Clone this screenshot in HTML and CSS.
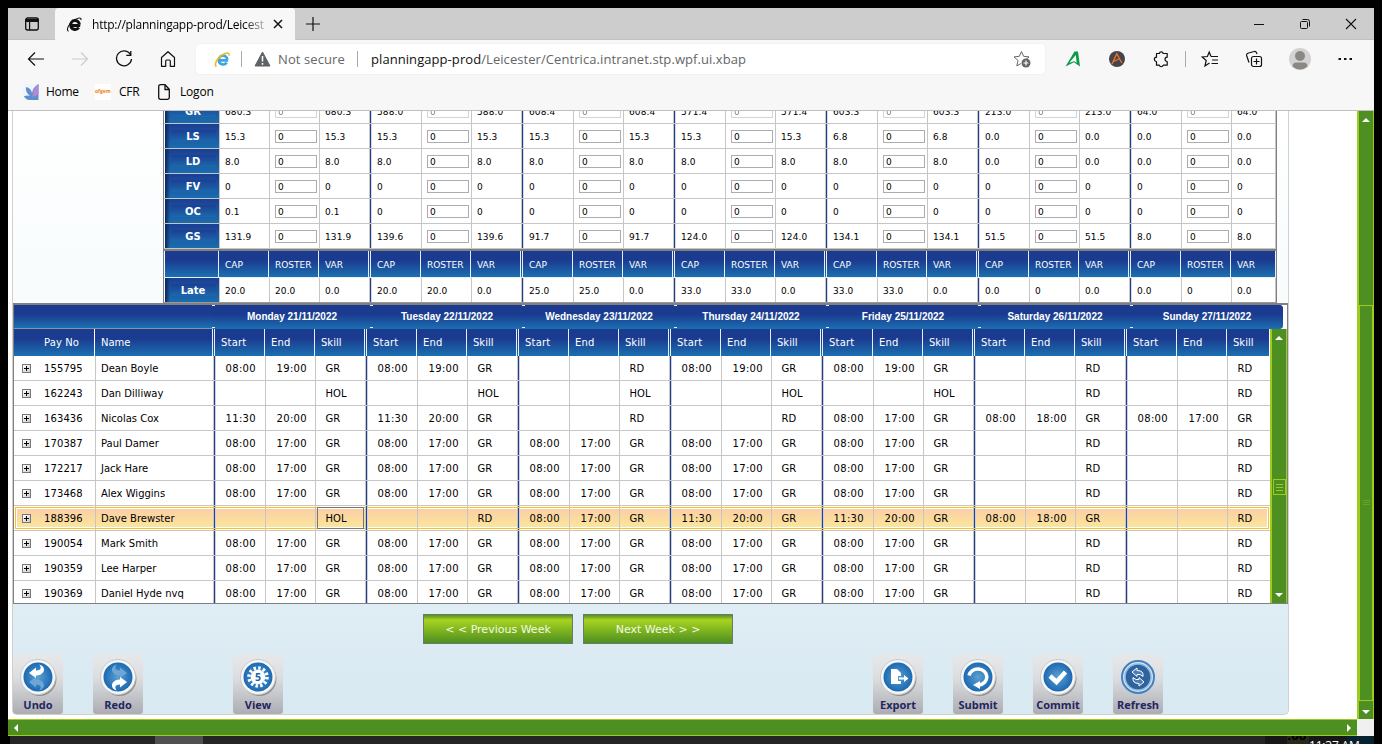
FILE: index.html
```html
<!DOCTYPE html>
<html lang="en">
<head>
<meta charset="utf-8">
<title>Planning</title>
<link rel="stylesheet" href="styles.css">
</head>
<body>
<div class="screen">
<div class="window">
  <header class="tabstrip">
    <div class="tab-menu"><svg width="16" height="16" viewBox="0 0 16 16"><rect x="1.700" y="2" width="12.600" height="12" rx="2" fill="none" stroke="#111" stroke-width="1.300"/><path d="M1.500 3h13v3h-13zM5 6h1.200v8H5z" fill="#111"/></svg></div>
    <div class="tab">
      <svg class="tab-ico" width="17" height="17" viewBox="0 0 17 17"><path d="M14.200 9.400H6.200M12.700 11.500a4.300 4.300 0 0 1-7.900-2.300a4.300 4.300 0 0 1 8.600-.6" fill="none" stroke="#111" stroke-width="3"/><path d="M2.600 15.300C0 14.500 2 8 8 4.200 12 1.500 15.500 1 15 4.200" fill="none" stroke="#111" stroke-width="1.100"/></svg>
      <span class="tab-title">http://planningapp-prod/Leicest</span>
      <svg width="10" height="10" viewBox="0 0 10 10"><path d="M1 1l8 8M9 1l-8 8" stroke="#111" stroke-width="1.500"/></svg>
    </div>
    <svg class="plus" width="14" height="14" viewBox="0 0 14 14"><path d="M7 0v14M0 7h14" stroke="#111" stroke-width="1.200"/></svg>
    <div class="wincontrols">
      <svg width="12" height="12" viewBox="0 0 12 12"><path d="M1 6.500h10" stroke="#111"/></svg>
      <svg width="12" height="12" viewBox="0 0 12 12"><rect x="1.500" y="3.500" width="7" height="7" rx="1" fill="none" stroke="#111"/><path d="M3.500 1.500h5a2 2 0 0 1 2 2v5" fill="none" stroke="#111"/></svg>
      <svg width="12" height="12" viewBox="0 0 12 12"><path d="M1 1l10 10M11 1L1 11" stroke="#111" stroke-width="1.100"/></svg>
    </div>
  </header>
  <nav class="toolbar">
    <div class="navbtns">
      <svg width="18" height="18" viewBox="0 0 18 18"><path d="M17 9H1.500M8 2.500L1.500 9 8 15.500" fill="none" stroke="#111" stroke-width="1.200"/></svg>
      <svg width="18" height="18" viewBox="0 0 18 18"><path d="M1 9h15.500M10 2.500L16.500 9 10 15.500" fill="none" stroke="#ccc" stroke-width="1.200"/></svg>
      <svg width="18" height="18" viewBox="0 0 18 18"><path d="M15.500 4.500A7.500 7.500 0 1 0 16.500 9M15.800 1v4.300h-4.500" fill="none" stroke="#111" stroke-width="1.300"/></svg>
      <svg width="18" height="18" viewBox="0 0 18 18"><path d="M2.500 7.500L9 1.700l6.500 5.800V16.300H11.300V11a1 1 0 0 0-1-1H7.700a1 1 0 0 0-1 1v5.300H2.500z" fill="none" stroke="#111" stroke-width="1.200" stroke-linejoin="round"/></svg>
    </div>
    <div class="address">
      <svg width="17" height="17" viewBox="0 0 17 17"><path d="M14.200 9.400H6.200M12.700 11.500a4.300 4.300 0 0 1-7.900-2.300a4.300 4.300 0 0 1 8.600-.6" fill="none" stroke="#3aa7e0" stroke-width="2.600"/><path d="M2.500 15.500C0 14.500 2 8 8 4.200 12 1.500 15.700 1 15 4.700" fill="none" stroke="#f2b91d" stroke-width="1.600"/></svg>
      <i class="vbar"></i>
      <svg width="17" height="16" viewBox="0 0 17 16"><path d="M8.500 1L16 15H1z" fill="#5f6368" stroke="#5f6368" stroke-linejoin="round"/><path d="M8.500 5v5.500M8.500 12v1.700" stroke="#fff" stroke-width="1.500"/></svg>
      <span class="insecure">Not secure</span>
      <i class="vbar second"></i>
      <span class="url"><b>planningapp-prod</b>/Leicester/Centrica.intranet.stp.wpf.ui.xbap</span>
      <svg class="favadd" width="18" height="18" viewBox="0 0 18 18"><path d="M8.500 1.500l2.100 4.800 5.400.6-3 2.600M8.500 1.500L6.300 6.300 1 6.900l4 3.600-1.200 5.400 4-2.300" fill="none" stroke="#666" stroke-linejoin="round"/><circle cx="13" cy="13" r="4.500" fill="#666"/><path d="M13 10.500v5M10.500 13h5" stroke="#fff" stroke-width="1.200"/></svg>
    </div>
    <div class="tools">
      <svg width="18" height="18" viewBox="0 0 18 18"><path d="M1.500 16.500L10.500 1.500H14l2 15-6-4.300zM5.300 12.800l5-1.600 2.400 1.500-.9-7.700z" fill="#0a9a48" fill-rule="evenodd"/></svg>
      <svg width="18" height="18" viewBox="0 0 18 18"><circle cx="9" cy="9" r="8" fill="#47424c"/><path d="M4 14L8.800 3.700 13.800 13M5.500 11.500L11 9" fill="none" stroke="#e87829" stroke-width="1.300"/></svg>
      <svg width="18" height="18" viewBox="0 0 18 18"><path d="M4.500 3.500h2.800a2 2 0 0 1 3.900 0h4v3.700a2 2 0 1 0 0 4.300v3.700h-4a2 2 0 0 1-3.900 0H4.500v-3.700a2.100 2.100 0 0 1 0-4.300z" fill="none" stroke="#111" stroke-width="1.200" stroke-linejoin="round"/></svg>
      <i class="vbar"></i>
      <svg width="18" height="18" viewBox="0 0 18 18"><path d="M10 6.500L8.200 2 6.400 6.500 1.200 7l4 3.500L4 16l4.500-3M10 6.500h7M11 10h6M10.500 13.500H17" fill="none" stroke="#111" stroke-width="1.200"/></svg>
      <svg width="18" height="18" viewBox="0 0 18 18"><rect x="6.500" y="6.500" width="10" height="10" rx="2" fill="none" stroke="#111" stroke-width="1.200"/><path d="M11.500 8.500v6M8.500 11.500h6M4 12.500L1.600 5.500a2 2 0 0 1 1.200-2.300L9 1.500a2 2 0 0 1 2.500 1.200L12 4" fill="none" stroke="#111" stroke-width="1.200"/></svg>
      <svg width="22" height="22" viewBox="0 0 22 22"><circle cx="11" cy="11" r="11" fill="#d5d3d1"/><circle cx="11" cy="8" r="5" fill="#8b8784"/><path d="M3.500 18.500q0-4 4-4h7q4 0 4 4a11 11 0 0 1-15 0" fill="#8b8784"/></svg>
      <svg width="16" height="16" viewBox="0 0 16 16"><path d="M1.500 7h2.500v2H1.500zM7 7h2.500v2H7zM12.500 7H15v2h-2.500z" fill="#111"/></svg>
    </div>
  </nav>
  <div class="bookmarks">
    <svg width="16" height="16" viewBox="0 0 16 16"><rect width="16" height="16" fill="#eef6fb"/><path d="M15.500 0v16H6q-4-1-5-4 4-1 6 0Q2 8 3 3q5 1 6 6 1-6 6.500-9" fill="#5f8fce"/><path d="M15.500 0v10q-3 2-6 3 0-9 6-13" fill="#b38ad0"/></svg><span class="bm1">Home</span>
    <span class="ofgem">ofgem</span><span class="bm2">CFR</span>
    <svg width="14" height="16" viewBox="0 0 14 16"><path d="M1.700 2.500q0-1.800 1.800-1.800H8l4.300 4.500v8.300q0 1.800-1.800 1.800h-7q-1.800 0-1.800-1.800zM8 1v4.500h4.300" fill="none" stroke="#111" stroke-width="1.300"/></svg><span class="bm3">Logon</span>
  </div>
  <main class="viewport">
    <div class="page">
      <section class="panel">
        <div class="capacity" id="capacity"></div>
        <div class="roster">
          <div class="roster-head">
            <div class="days" id="days"></div>
          </div>
          <div class="roster-body">
            <div class="grid" id="grid"></div>
            <div class="inner-scroll"><i class="up"></i><i class="grip"></i><i class="down"></i></div>
          </div>
        </div>
        <div class="weeks"><button>&lt; &lt; Previous Week</button><button>Next Week &gt; &gt;</button></div>
        <div class="actions" id="actions"></div>
      </section>
    </div>
    <div class="outer-scroll"><i class="up"></i><div class="thumb"><i></i></div><i class="down"></i></div>
  </main>
  <div class="hscroll"><div class="track"><i class="left"></i><i class="right"></i></div></div>
</div>
<footer class="taskbar"><span class="task"></span><span class="tray">.00</span><span class="traybox"></span><span class="clock">11:37 AM</span></footer>
</div>
<script src="script.js"></script>
</body>
</html>
```
FILE: styles.css
```css
* { box-sizing: border-box; }
body { margin: 0; background: #000; font-family: "DejaVu Sans", Verdana, sans-serif; color: #000; }
svg { display: block; flex: none; }
.screen { height: 744px; overflow: hidden; padding-top: 8px; display: flex; flex-direction: column; }
.window { margin: 0 8px; height: 728px; flex: none; background: #f7f7f7; display: flex; flex-direction: column; }
.tabstrip { height: 32px; background: #cdcdcd; display: flex; align-items: center; flex: none; border-bottom: 1px solid #c2c2c2; font: 12px "Open Sans", sans-serif; }
.tab-menu { width: 47px; padding-left: 16px; }
.tab { width: 240px; height: 32px; background: #f7f7f7; border-radius: 4px 4px 0 0; display: flex; align-items: center; padding-left: 11px; margin-bottom: -1px; }
.tab-title { width: 172px; margin: 0 9px 0 9px; white-space: nowrap; letter-spacing: -.23px; -webkit-mask-image: linear-gradient(90deg, #000 88%, #0004); mask-image: linear-gradient(90deg, #000 88%, #0004); }
.plus { margin-left: 11px; }
.wincontrols { margin-left: auto; display: flex; gap: 34px; padding-right: 17px; }
.toolbar { height: 38px; display: flex; align-items: center; flex: none; }
.navbtns { display: flex; gap: 26px; padding-left: 19px; width: 187px; }
.address { width: 849px; height: 30px; background: #fff; border-radius: 4px; display: flex; align-items: center; padding: 0 14px 0 18px; font: 13px "Open Sans", sans-serif; box-shadow: 0 0 2px #e4e4e4; margin-left: 1px; }
.vbar { width: 1px; height: 16px; background: #aaa; margin: 0 12px 0 10px; }
.vbar.second { margin: 0 13px 0 12px; }
.insecure { color: #666; margin-left: 7px; width: 67px; white-space: nowrap; letter-spacing: .1px; }
.url { color: #666; white-space: nowrap; letter-spacing: .07px; }
.url b { font-weight: normal; color: #111; }
.favadd { margin-left: auto; }
.tools { display: flex; align-items: center; padding-left: 19px; gap: 26px; }
.tools .vbar { margin: 0 -11px 0 -11px; }
.bookmarks { height: 32px; flex: none; display: flex; align-items: flex-start; padding: 6px 0 0 15px; font: 12px/16px "Open Sans", sans-serif; }
.bookmarks span { margin-left: 7px; }
.bookmarks .bm1 { width: 34px; letter-spacing: -.3px; }
.bookmarks .ofgem { width: 16px; height: 16px; margin-left: 15px; background: #fff; color: #f08010; font: bold 5px/15px "Open Sans", sans-serif; }
.bookmarks .bm2 { width: 24px; margin: 0 14px 0 8px; letter-spacing: -.2px; }
.bookmarks .bm3 { margin-left: 9px; letter-spacing: -.2px; }
.viewport { height: 609px; flex: none; display: flex; border-top: 1px solid #c0c0c0; background: #fff; }
.page { width: 1349px; padding-left: 4px; overflow: hidden; }
.panel { width: 1277px; height: 604px; border: 1px solid #d0d0d0; border-top: 0; border-radius: 0 0 5px 5px; background: linear-gradient(#fff, #f8fcfd 30%, #e2eff6 75%, #d8e9f1); display: flex; flex-direction: column; }

.capacity { margin-left: 150px; width: 1114px; height: 192px; border-left: 1px solid #808080; border-right: 1px solid #808080; background: #fff; display: flex; flex-direction: column; justify-content: flex-end; overflow: hidden; flex: none; font-size: 9px; }
.cap-row { display: flex; height: 25px; flex: none; padding-left: 1px; border-bottom: 1px solid #c6c6c6; line-height: 22px; }
.cap-row > div { flex: none; }
.cap-row .label { width: 55px; border-right: 1px solid #c6c6c6; background: linear-gradient(90deg, #0a2454 0, transparent 5px), linear-gradient(#1b3f92, #1b6daf); display: flex; align-items: center; justify-content: center; color: #fff; font-weight: bold; font-size: 10px; padding-left: 2px; }
.label span { width: 45px; height: 12px; line-height: 13px; text-align: center; background: linear-gradient(#1b3f94, #1c69ac); }
.cap-row .c { width: 50px; border-right: 1px solid #c6c6c6; padding: 2px 0 0 5px; display: flex; align-items: center; letter-spacing: .1px; }
.cap-row .c.v { width: 51px; border-right: 1px solid #1b3f92; box-shadow: inset -1px 0 #c6c6c6, 1px 0 #d8d8d8; margin-right: 1px; }
.cap-row .c.v:last-child { width: 44px; border-right: 1px solid #c6c6c6; box-shadow: none; margin-right: 0; }
.cap-row input { width: 42px; height: 13px; border: 1px solid #abadb3; padding: 0 0 0 2px; font: 9px "DejaVu Sans", sans-serif; background: #fff; color: #000; margin-top: -1px; }
.cap-row.clipped input { opacity: .5; }
.cap-row.head { height: 29px; border-top: 2px solid #808080; border-bottom: 1px solid #e8eef6; color: #fff; }
.cap-row.head > div, .g-row.head > div { background: linear-gradient(#1b3b90 35%, #1b70b1); border-right-color: #e8eef6; }
.cap-row.head > div { padding-top: 2px; letter-spacing: 0; }
.cap-row.head .label { width: 54px; }
.cap-row.head .c { padding-left: 6px; }
.cap-row.head .c.v { width: 52px; margin-right: 0; border-right: 3px double #e8eef6; box-shadow: none; }
.cap-row.head .c.v:last-child { width: 45px; border-right: 1px solid #e8eef6; }
.cap-row.late { border-bottom: 1px solid #999; }

.roster { width: 1275px; height: 301px; flex: none; border: 1px solid #808080; border-top-width: 2px; background: #fff; }
.roster-head { height: 24px; display: flex; background: linear-gradient(#1b3b90 40%, #1b70b1); width: 1269px; border-radius: 0 4px 4px 0; border-bottom: 1px solid #8694a8; }
.days { margin-left: 199px; display: flex; color: #fff; font: bold 10px/23px "Liberation Sans", Arial, sans-serif; }
.days div { position: relative; width: 152px; text-align: center; height: 24px; background: linear-gradient(#1b3b90 40%, #1b70b1); }
.days div:first-child { width: 158px; }
.days div::before, .days div::after { content: ""; position: absolute; left: -1px; top: 0; width: 3px; height: 1px; background: #e8eef6; }
.days div::after { top: 22px; }
.days div:last-child { border-radius: 0 4px 4px 0; }
.roster-body { display: flex; height: 274px; }
.grid { width: 1256px; overflow: hidden; font-size: 10px; flex: none; }
.g-row { display: flex; height: 25px; line-height: 25px; border-bottom: 1px solid #c6c6c6; white-space: nowrap; }
.g-row > div { flex: none; }
.g-row .x { width: 25px; padding: 8px 0 0 8px; }
.g-row .p { width: 57px; padding-left: 5px; border-right: 1px solid #c6c6c6; letter-spacing: .1px; }
.g-row .n { width: 119px; padding-left: 5px; border-right: 1px solid #1b3f92; }
.g-row .n, .g-row .v { box-shadow: inset -1px 0 #c6c6c6, 1px 0 #d0d0d0; }
.g-row .c { width: 50px; padding-left: 10.6px; border-right: 1px solid #c6c6c6; letter-spacing: .3px; }
.g-row .c.s { width: 51px; }
.g-row .v { width: 51px; padding-left: 9.6px; border-right: 1px solid #1b3f92; }
.g-row .v:last-child { width: 42px; border-right: 0; box-shadow: none; }
.g-row.head { height: 27px; border: 0; line-height: 27px; color: #fff; }
.g-row.head .p { width: 56px; border-right: 1px solid #fff; }
.g-row.head .n { width: 120px; padding-left: 6px; border-right: 3px double #e8eef6; }
.g-row.head .n, .g-row.head .v { box-shadow: none; }
.g-row.head .c { padding-left: 6px; letter-spacing: .2px; }
.g-row.head .c.s { width: 50px; }
.g-row.head .v { width: 52px; padding-left: 6px; border-right: 3px double #e8eef6; }
.g-row.head .v:last-child { width: 43px; border-right: 1px solid #fff; }
.g-row.sel { background: linear-gradient(#fbcfa4, #fbe59b) 3px 3px / 1250px 18px no-repeat #fff; position: relative; }
.g-row.sel::after { content: ""; position: absolute; inset: 1px 1px 1px 1px; border: 1px solid #fcc02f; }
.g-row.sel .focus { position: relative; z-index: 1; }
.g-row.sel .focus::before { content: ""; box-sizing: border-box; position: absolute; left: 1px; top: 1px; width: 47px; height: 22px; border: 1px solid #777; }
.plusbox { width: 9px; height: 9px; border: 1px solid #777; background: linear-gradient(#000, #000) center / 5px 1px no-repeat, linear-gradient(#000, #000) center / 1px 5px no-repeat, linear-gradient(135deg, #fff, #ccc); display: block; }
.inner-scroll { width: 17px; flex: none; background: #4d8f21; border: 1px solid #9dcb1e; border-width: 0 1px 0 2px; display: flex; flex-direction: column; align-items: center; }
.up, .down { border: 4px solid transparent; width: 0; height: 0; }
.up { border-bottom-color: #fff; border-top: 0; margin-top: 7px; }
.down { border-top-color: #fff; border-bottom: 0; margin-top: auto; margin-bottom: 6px; }
.grip { width: 13px; height: 16px; border: 1px solid #9dcb1e; margin-top: 139px; background: repeating-linear-gradient(#9dcb1e 0 1px, transparent 1px 3px) center / 7px 7px no-repeat; }
.weeks { display: flex; gap: 10px; padding: 10px 0 0 410px; flex: none; }
.weeks button { width: 150px; height: 30px; border: 1px solid #6c7a6c; background: linear-gradient(#568f20 0, #a7d31f 5px, #4d8f21); color: #f3f9e6; font: 11px "DejaVu Sans", sans-serif; padding: 0; }
.actions { display: flex; margin-top: 10px; }
.action { width: 50px; height: 60px; flex: none; border-radius: 3px; background: linear-gradient(#e6e9eb, #dcdddf 40%, #acadb3); text-align: center; margin-right: 30px; font: bold 11px/13px "Open Sans", sans-serif; color: #232560; }
.action:nth-of-type(2) { margin-right: 90px; }
.action:nth-of-type(3) { margin-right: 590px; }
.action svg { margin: 4px auto 1px; }
.defs { position: absolute; }
.outer-scroll { width: 17px; background: #4d8f21; border: 1px solid #9dcb1e; border-width: 0 1px 0 2px; display: flex; flex-direction: column; align-items: center; }
.outer-scroll .down { margin-bottom: 5px; }
.thumb { width: 15px; height: 396px; margin: 183px 0 0 -1px; border: 1px solid #9dcb1e; border-left-width: 2px; display: flex; align-items: center; justify-content: center; flex: none; }
.thumb i { width: 7px; height: 6px; background: repeating-linear-gradient(#66a522 0 1px, transparent 1px 2px); }
.hscroll { height: 17px; background: #f0f0f0; flex: none; }
.track { width: 1349px; height: 17px; background: #4d8f21; border: 1px solid #9dcb1e; border-width: 1px 0; display: flex; justify-content: space-between; align-items: center; padding: 0 6px; }
.left, .right { border: 4px solid transparent; }
.left { border-right-color: #fff; border-left: 0; }
.right { border-left-color: #fff; border-right: 0; }
.taskbar { height: 8px; margin: 0 8px 0 10px; background: linear-gradient(#252525, #252525) left / 1255px 100% no-repeat #171717; display: flex; overflow: hidden; flex: none; }
.task { width: 48px; background: #505050; margin-left: 145px; flex: none; }
.tray { margin-left: 1084px; width: 22px; color: #000; background: #29271a; font: bold 11px/2px "DejaVu Sans", sans-serif; flex: none; }
.traybox { width: 38px; margin-left: 38px; background: #06222f; flex: none; }
.clock { color: #fff; font: 12px/20px "Open Sans", sans-serif; white-space: nowrap; margin-left: -76px; position: relative; letter-spacing: -.2px; }
```
FILE: script.js
```js
const capRows = [
  ["GR", "680.3", "588.0", "608.4", "571.4", "603.3", "213.0", "64.0"],
  ["LS", "15.3", "15.3", "15.3", "15.3", "6.8", "0.0", "0.0"],
  ["LD", "8.0", "8.0", "8.0", "8.0", "8.0", "0.0", "0.0"],
  ["FV", "0", "0", "0", "0", "0", "0", "0"],
  ["OC", "0.1", "0", "0", "0", "0", "0", "0"],
  ["GS", "131.9", "139.6", "91.7", "124.0", "134.1", "51.5", "8.0"]
];
let html = "";
capRows.forEach(([name, ...vals], i) => {
  html += `<div class="cap-row${i ? "" : " clipped"}"><div class="label"><span>${name}</span></div>` +
    vals.map(v => `<div class="c">${v}</div><div class="c"><input value="0"></div><div class="c v">${v}</div>`).join("") + "</div>";
});
html += '<div class="cap-row head"><div class="label"></div>' +
  '<div class="c">CAP</div><div class="c">ROSTER</div><div class="c v">VAR</div>'.repeat(7) + "</div>";
html += '<div class="cap-row late"><div class="label"><span>Late</span></div>' +
  [["20.0", "20.0"], ["20.0", "20.0"], ["25.0", "25.0"], ["33.0", "33.0"], ["33.0", "33.0"], ["0.0", "0"], ["0.0", "0"]]
    .map(([a, b]) => `<div class="c">${a}</div><div class="c">${b}</div><div class="c v">0.0</div>`).join("") + "</div>";
document.getElementById("capacity").innerHTML = html;

document.getElementById("days").innerHTML =
  ["Monday 21", "Tuesday 22", "Wednesday 23", "Thursday 24", "Friday 25", "Saturday 26", "Sunday 27"]
    .map(d => `<div>${d}/11/2022</div>`).join("");

const G = ["08:00", "17:00", "GR"], L = ["08:00", "19:00", "GR"], M = ["11:30", "20:00", "GR"],
  E = ["08:00", "18:00", "GR"], R = ["", "", "RD"], H = ["", "", "HOL"];
const staff = [
  ["155795", "Dean Boyle", L, L, R, L, L, R, R],
  ["162243", "Dan Dilliway", H, H, H, H, H, R, R],
  ["163436", "Nicolas Cox", M, M, R, R, G, E, G],
  ["170387", "Paul Damer", G, G, G, G, G, R, R],
  ["172217", "Jack Hare", G, G, G, G, G, R, R],
  ["173468", "Alex Wiggins", G, G, G, G, G, R, R],
  ["188396", "Dave Brewster", H, R, G, M, M, E, R],
  ["190054", "Mark Smith", G, G, G, G, G, R, R],
  ["190359", "Lee Harper", G, G, G, G, G, R, R],
  ["190369", "Daniel Hyde nvq", G, G, G, G, G, R, R]
];
let grid = '<div class="g-row head"><div class="x"></div><div class="p">Pay No</div><div class="n">Name</div>' +
  '<div class="c s">Start</div><div class="c">End</div><div class="v">Skill</div>'.repeat(7) + "</div>";
staff.forEach(([no, name, ...days], i) => {
  grid += `<div class="g-row${i === 6 ? " sel" : ""}"><div class="x"><i class="plusbox"></i></div><div class="p">${no}</div><div class="n">${name}</div>` +
    days.map(([s, e, k], j) => `<div class="c s">${s}</div><div class="c">${e}</div><div class="v${i === 6 && j === 0 ? " focus" : ""}">${k}</div>`).join("") + "</div>";
});
document.getElementById("grid").innerHTML = grid;

const swirl = '<path d="M20 6.500c8 2 6 11-3 11v2.500l-7-5 7-5.500v3c5 0 6-3 3-6z"/>';
const icons = {
  Undo: `<g fill="#6fa6d6" transform="translate(0 39) scale(1 -1)">${swirl}</g><g fill="#fff">${swirl}</g>`,
  Redo: `<g fill="#6fa6d6" transform="translate(38 0) scale(-1 1)">${swirl}</g><g fill="#fff" transform="translate(38 39) scale(-1 -1)">${swirl}</g>`,
  View: '<circle cx="19" cy="19" r="9" fill="none" stroke="#fff" stroke-width="3.500" stroke-dasharray="2.400 2.310"/><circle cx="19" cy="19" r="7.300" fill="#fff"/><text x="19" y="22.800" text-anchor="middle" font-size="10.500" font-weight="bold" fill="#1d5fa8">5</text>',
  Export: '<path d="M12 11h6l4 4v3h-3v5h3v3H12zM20 19.500h5v-2.500l4.500 3.500-4.500 3.500v-2.500h-5z" fill="#fff"/>',
  Submit: '<path d="M10 17.500a9 8 0 1 1 10 9.500" fill="none" stroke="#fff" stroke-width="3.500"/><path d="M21 23v8l-7-4z" fill="#fff"/>',
  Commit: '<path d="M11 18l6.500 6 9-10" fill="none" stroke="#fff" stroke-width="4.500"/>',
  Refresh: '<circle cx="19" cy="19" r="13" fill="#2d649f" stroke="#8fb7dc" stroke-width="1.500"/><path d="M13 14l5-4v2.500q7 0 6 6-3-3-6-2v2zM25 24l-5 4v-2.500q-7 0-6-6 3 3 6 2v-2z" fill="#4b7fb4" stroke="#fff"/>'
};
document.getElementById("actions").innerHTML =
  `<svg class="defs" width="0" height="0"><defs><radialGradient id="blue"><stop offset="0" stop-color="#5ba1d2"/><stop offset="1" stop-color="#1c69b2"/></radialGradient></defs></svg>` +
  Object.entries(icons).map(([name, art]) => {
    const ring = name === "Refresh"
      ? '<circle cx="19" cy="19" r="16" fill="#d9e4ee" stroke="#3f83c3" stroke-width="2"/>'
      : '<circle cx="20.500" cy="21" r="17" fill="#777" opacity=".7"/><circle cx="19" cy="19" r="17.500" fill="#f5f6f7" stroke="#c9c9c9"/><circle cx="19" cy="19" r="14.500" fill="url(#blue)"/>';
    return `<div class="action"><svg width="39" height="39" viewBox="0 0 39 39">${ring}${art}</svg>${name}</div>`;
  }).join("");
```
